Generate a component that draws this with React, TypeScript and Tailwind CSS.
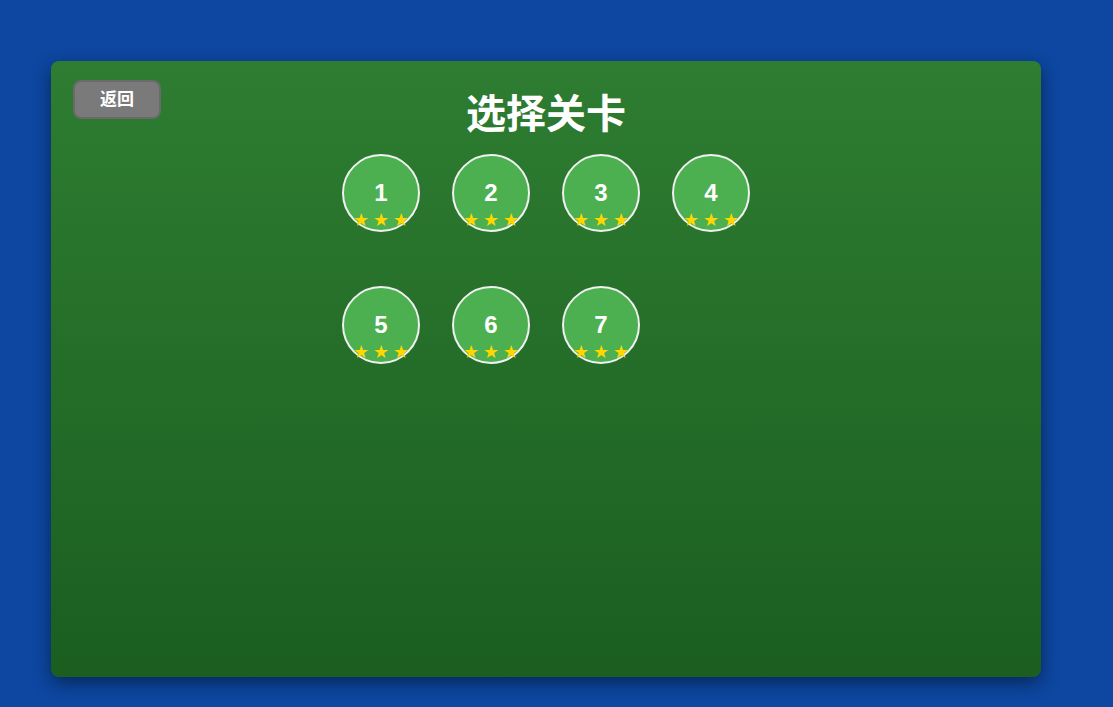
import React from "react";

const levels = [1, 2, 3, 4, 5, 6, 7];

export default function App() {
  return (
    <div className="w-[1113px] h-[707px] bg-[#0d47a1] overflow-hidden pt-[61px] pl-[51px]" style={{ fontFamily: '"Liberation Sans", "Noto Sans CJK SC", sans-serif' }}>
      <div className="relative w-[990px] h-[616px] rounded-lg bg-gradient-to-b from-[#2e7d32] to-[#1b5e20] shadow-[0_6px_18px_rgba(0,0,0,0.45)] flex flex-col items-center">
        <button className="absolute left-[22px] top-[19px] w-[88px] h-[39px] rounded-lg bg-[#7a7a7a] border-2 border-[#6a6a6a] text-white font-bold text-[17px] leading-none flex items-center justify-center">
          返回
        </button>
        <h1 className="mt-[29px] text-white font-bold text-[40px] leading-[48px]">选择关卡</h1>
        <div className="mt-[16px] grid grid-cols-[repeat(4,78px)] gap-x-[32px] gap-y-[54px]">
          {levels.map((n) => (
            <div key={n} className="relative w-[78px] h-[78px] rounded-full bg-[#4caf50] border-2 border-[#f0f0f0] flex items-center justify-center">
              <span className="text-white font-bold text-[24px] leading-none">{n}</span>
              <div className="absolute left-0 right-0 top-[54px] flex justify-center">
                {[0, 1, 2].map((i) => (
                  <span key={i} className="w-[20px] text-center text-[#ffd700] text-[18px] leading-[20px]" style={{ fontFamily: '"DejaVu Sans", sans-serif' }}>★</span>
                ))}
              </div>
            </div>
          ))}
        </div>
      </div>
    </div>
  );
}
